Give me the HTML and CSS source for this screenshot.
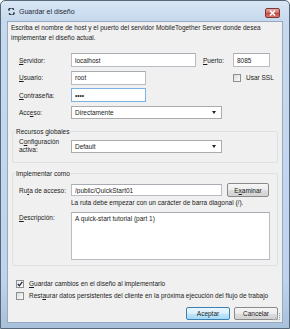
FILE: index.html
```html
<!DOCTYPE html>
<html lang="es">
<head>
    <meta charset="UTF-8">
    <title>Guardar el diseño</title>
    <link rel="stylesheet" href="styles.css">
</head>
<body>
    <div class="window">
        <div class="titlebar">
            <svg class="app-icon" width="7" height="7" viewBox="0 0 7 7">
                <path d="M1 2.2 A2.2 2.2 0 0 1 5.6 2" fill="none" stroke="#2b3440" stroke-width="1.3"/>
                <path d="M6 4.8 A2.2 2.2 0 0 1 1.4 5" fill="none" stroke="#2b3440" stroke-width="1.3"/>
                <path d="M0 1.2 L2 1.6 L1 3.2 Z M7 5.8 L5 5.4 L6 3.8 Z" fill="#2b3440"/>
            </svg>
            <span class="title">Guardar el diseño</span>
            <div class="close-btn">
                <svg width="7" height="6" viewBox="0 0 7 6">
                    <path d="M1 0.5 L6 5.5 M6 0.5 L1 5.5" stroke="#fff" stroke-width="1.6"/>
                </svg>
            </div>
        </div>

        <div class="client">
            <p class="intro">Escriba el nombre de host y el puerto del servidor MobileTogether Server donde desea<br>implementar el diseño actual.</p>

            <div class="server-form">
                <label class="lbl"><u>S</u>ervidor:</label>
                <input class="field server-field" type="text" value="localhost">
                <label class="lbl port-lbl"><u>P</u>uerto:</label>
                <input class="field port-field" type="text" value="8085">

                <label class="lbl"><u>U</u>suario:</label>
                <input class="field short-field" type="text" value="root">
                <label class="check ssl-check"><span class="box"></span><span>Usar SSL</span></label>

                <label class="lbl"><u>C</u>ontraseña:</label>
                <input class="field short-field focused" type="password" value="abcd">

                <label class="lbl">Acc<u>e</u>so:</label>
                <div class="combo wide-combo">Directamente<span class="arrow"></span></div>
            </div>

            <fieldset class="group">
                <legend>Recursos globales</legend>
                <div class="group-row">
                    <label class="lbl two-line">C<u>o</u>nfiguración<br>activa:</label>
                    <div class="combo wide-combo">Default<span class="arrow"></span></div>
                </div>
            </fieldset>

            <fieldset class="group deploy-group">
                <legend>Implementar como</legend>
                <div class="group-row">
                    <label class="lbl">Ru<u>t</u>a de acceso:</label>
                    <input class="field path-field" type="text" value="/public/QuickStart01">
                    <button class="btn browse-btn">E<u>x</u>aminar</button>
                </div>
                <div class="hint">La ruta debe empezar con un carácter de barra diagonal (/).</div>
                <div class="group-row desc-row">
                    <label class="lbl"><u>D</u>escripción:</label>
                    <div class="field desc-field">A quick-start tutorial (part 1)</div>
                </div>
            </fieldset>

            <div class="options">
                <label class="check"><span class="box checked">
                    <svg width="6" height="6" viewBox="0 0 6 6"><path d="M0.8 3 L2.4 4.8 L5.3 0.8" fill="none" stroke="#1f2a44" stroke-width="1.3"/></svg>
                </span><span><u>G</u>uardar cambios en el diseño al implementarlo</span></label>
                <label class="check"><span class="box"></span><span>Rest<u>a</u>urar datos persistentes del cliente en la próxima ejecución del flujo de trabajo</span></label>
            </div>

            <div class="actions">
                <button class="btn default-btn">Aceptar</button>
                <button class="btn">Cancelar</button>
            </div>

            <svg class="grip" width="8" height="8" viewBox="0 0 8 8">
                <g fill="#a9b3bd">
                    <rect x="6" y="0" width="1.2" height="1.2"/>
                    <rect x="4" y="2" width="1.2" height="1.2"/><rect x="6" y="2" width="1.2" height="1.2"/>
                    <rect x="2" y="4" width="1.2" height="1.2"/><rect x="4" y="4" width="1.2" height="1.2"/><rect x="6" y="4" width="1.2" height="1.2"/>
                    <rect x="0" y="6" width="1.2" height="1.2"/><rect x="2" y="6" width="1.2" height="1.2"/><rect x="4" y="6" width="1.2" height="1.2"/><rect x="6" y="6" width="1.2" height="1.2"/>
                </g>
            </svg>
        </div>
    </div>
</body>
</html>
```

FILE: styles.css
```css
* {
    box-sizing: border-box;
}

body {
    margin: 0;
    font-family: "Liberation Sans", Arial, sans-serif;
    font-size: 6.5px;
    color: #1b1b1b;
}

/* Window frame */
.window {
    width: 290px;
    height: 329px;
    border: 1px solid #56677a;
    border-radius: 5px 5px 0 0;
    background: linear-gradient(#d9e6f4, #c6d9ee 20px, #bfd4ec 280px, #a9c0da);
    padding: 0 6px 5px;
    display: flex;
    flex-direction: column;
}

.titlebar {
    height: 20px;
    display: flex;
    align-items: center;
    padding-left: 1px;
}

.app-icon {
    margin-top: 1px;
}

.title {
    margin-left: 4px;
    font-size: 7px;
    color: #1e2a36;
}

.close-btn {
    margin-left: auto;
    margin-right: 3px;
    margin-top: 4px;
    width: 15px;
    height: 10px;
    border: 1px solid #7a3a3a;
    border-radius: 2px;
    background: linear-gradient(#e8a8a0, #d0665c 50%, #c4453a 51%, #d87a6c);
    display: flex;
    align-items: center;
    justify-content: center;
}

.client {
    flex: 1;
    position: relative;
    background: #f0f0f0;
    border: 1px solid #94aac2;
}

.intro {
    margin: 1px 0 0 3px;
    line-height: 10px;
}

/* Server settings */
.server-form {
    display: grid;
    grid-template-columns: 52px 125px 7px 30px 37px;
    grid-auto-rows: 14px;
    row-gap: 3.5px;
    align-items: center;
    margin: 10px 0 0 11px;
}

.lbl {
    white-space: nowrap;
}

.server-form .lbl:not(.port-lbl) {
    grid-column: 1;
}

.port-lbl {
    grid-column: 4;
}

.ssl-check {
    grid-column: 5;
    white-space: nowrap;
}

.field {
    height: 14px;
    border: 1px solid #b9bcc2;
    border-top-color: #a9adb3;
    background: #fff;
    font: inherit;
    color: inherit;
    padding: 0 3px;
    margin: 0;
    outline: none;
}

.server-field {
    width: 125px;
}

.port-field {
    width: 37px;
}

.short-field {
    width: 75px;
    grid-column: 2;
}

.focused {
    border-color: #7db2e2;
}

.combo {
    height: 13px;
    border: 1px solid #acacac;
    background: #fff;
    padding: 0 3px;
    display: flex;
    align-items: center;
}

.wide-combo {
    width: 151px;
    grid-column: 2 / 6;
}

.arrow {
    margin-left: auto;
    margin-right: 2px;
    border-left: 2.5px solid transparent;
    border-right: 2.5px solid transparent;
    border-top: 3px solid #222;
}

/* Group boxes */
.group {
    margin: 7px 0 0 4px;
    width: 266px;
    border: 1px solid #e0e0e0;
    border-radius: 2px;
    padding: 0 0 9px 2px;
}

.group legend {
    padding: 0 1px;
    line-height: 9px;
}

.deploy-group {
    margin-top: 6px;
    padding-bottom: 5px;
}

.group-row {
    display: flex;
    align-items: center;
    margin: 4px 0 0 4px;
    height: 13px;
}

.deploy-group .group-row {
    margin-top: 6px;
}

.group-row .lbl {
    width: 52px;
}

.two-line {
    line-height: 8px;
}

.path-field {
    width: 151px;
    height: 12px;
}

.hint {
    margin-left: 56px;
    line-height: 9px;
    margin-top: 1px;
}

.desc-row {
    height: 48px;
    align-items: flex-start;
}

.deploy-group .desc-row {
    margin-top: 5px;
}

.desc-row .lbl {
    margin-top: 2px;
}

.desc-field {
    width: 199px;
    height: 48px;
    padding-top: 2px;
}

/* Checkboxes */
.check {
    display: flex;
    align-items: center;
    gap: 5px;
    line-height: 10px;
    white-space: nowrap;
}

.box {
    width: 8px;
    height: 8px;
    border: 1px solid #8e8f8f;
    background: linear-gradient(135deg, #dcdcdc, #fbfbfb);
    display: flex;
    align-items: center;
    justify-content: center;
    flex: none;
}

.box.checked {
    background: linear-gradient(135deg, #e8e8e8, #ffffff);
}

.options {
    margin: 13px 0 0 8px;
    display: flex;
    flex-direction: column;
    gap: 2px;
}

/* Buttons */
.btn {
    height: 13px;
    padding: 0 4px;
    font: inherit;
    color: inherit;
    border: 1px solid #8a8a8a;
    border-radius: 2px;
    background: linear-gradient(#f6f6f6, #ececec 50%, #dddddd 51%, #d2d2d2);
}

.browse-btn {
    width: 42px;
    height: 14px;
    margin-left: 5px;
}

.actions {
    display: flex;
    justify-content: flex-end;
    gap: 4px;
    margin: 6px 4px 0 0;
}

.actions .btn {
    width: 44px;
}

.default-btn {
    border-color: #3c7fb1;
    background: linear-gradient(#eaf6fd, #d9f0fc 50%, #bee6fd 51%, #a7d9f5);
}

.grip {
    position: absolute;
    right: 1px;
    bottom: 1px;
}
```
